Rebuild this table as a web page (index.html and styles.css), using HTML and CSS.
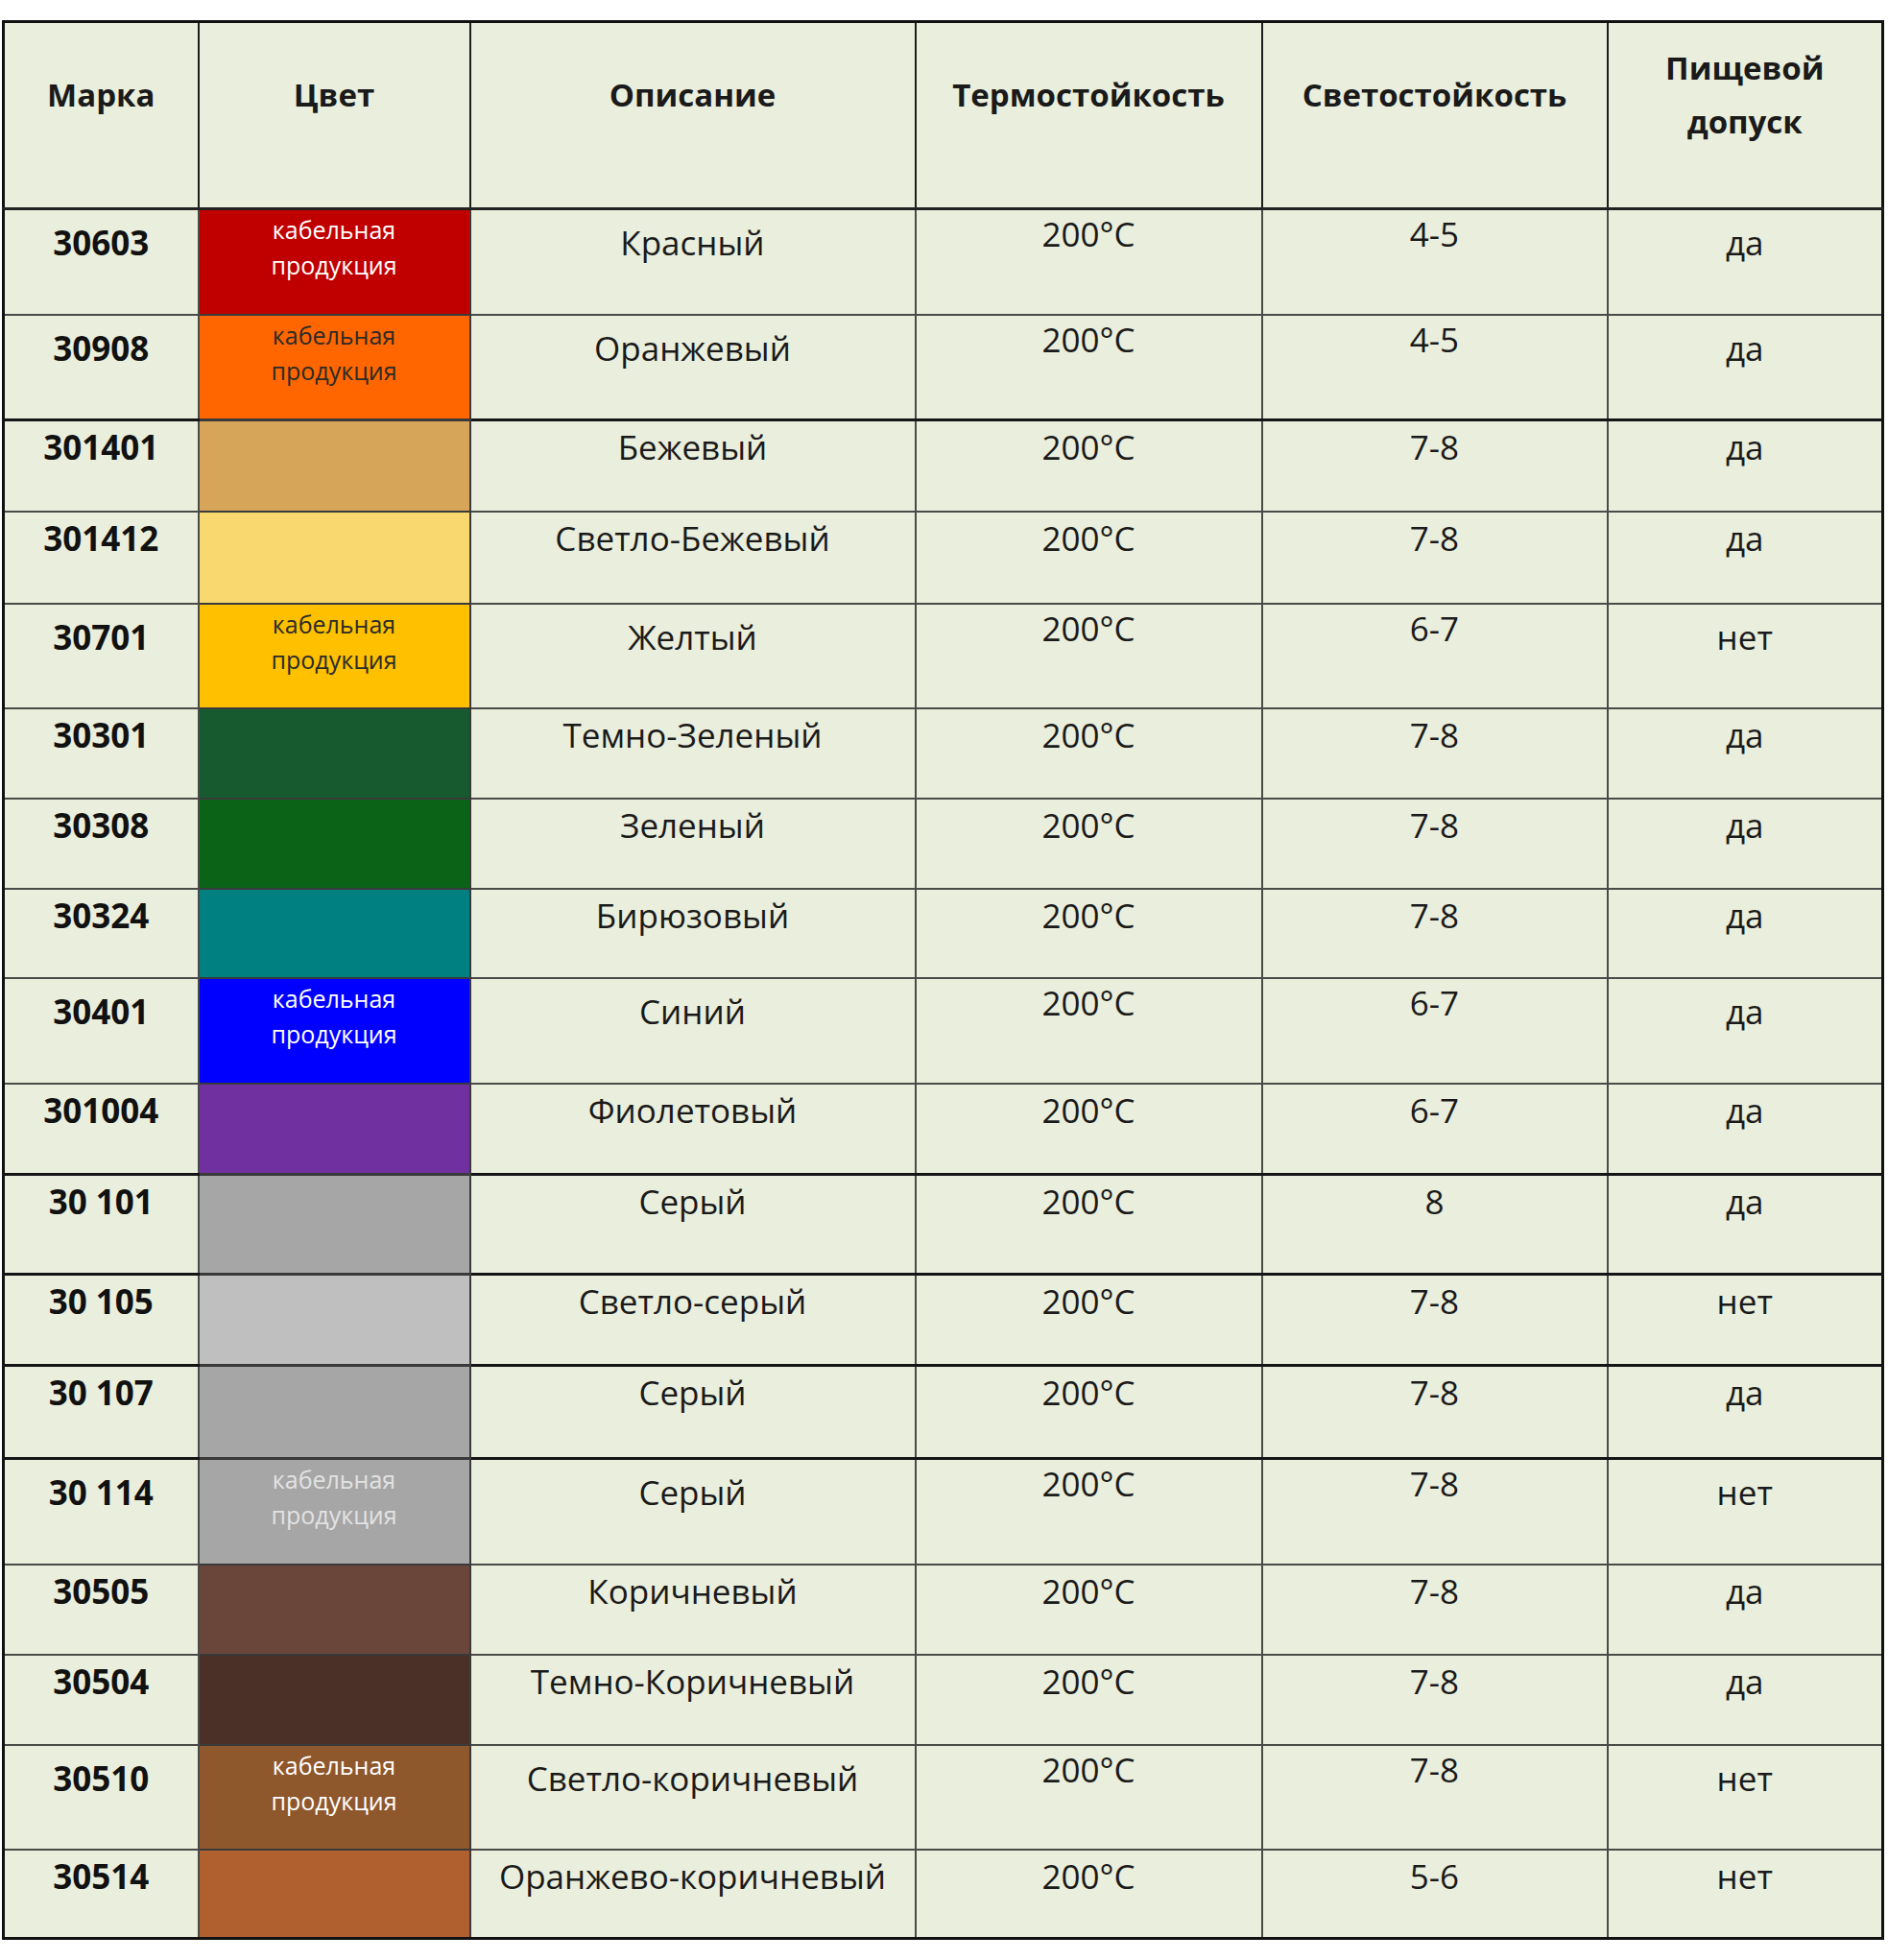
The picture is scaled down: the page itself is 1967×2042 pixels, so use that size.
FILE: index.html
```html
<!DOCTYPE html>
<html lang="ru">
<head>
<meta charset="utf-8">
<title>Цвета</title>
<link rel="stylesheet" href="styles.css">
</head>
<body>
<table class="colors">
  <colgroup>
    <col class="c-mark"><col class="c-color"><col class="c-desc"><col class="c-temp"><col class="c-light"><col class="c-food">
  </colgroup>
  <thead>
    <tr class="head">
      <th>Марка</th><th>Цвет</th><th>Описание</th><th>Термостойкость</th><th>Светостойкость</th><th>Пищевой<br>допуск</th>
    </tr>
  </thead>
  <tbody>
    <tr class="r-cable r110">
      <td class="mark">30603</td><td class="sw red"><span class="cable">кабельная<br>продукция</span></td><td class="desc">Красный</td><td class="temp">200°C</td><td class="temp">4-5</td><td class="food">да</td>
    </tr>
    <tr class="r-cable r110 thick">
      <td class="mark">30908</td><td class="sw orange"><span class="cable dark">кабельная<br>продукция</span></td><td class="desc">Оранжевый</td><td class="temp">200°C</td><td class="temp">4-5</td><td class="food">да</td>
    </tr>
    <tr class="r95">
      <td class="mark">301401</td><td class="sw beige"></td><td class="desc">Бежевый</td><td class="temp">200°C</td><td class="temp">7-8</td><td class="food">да</td>
    </tr>
    <tr class="r96">
      <td class="mark">301412</td><td class="sw lbeige"></td><td class="desc">Светло-Бежевый</td><td class="temp">200°C</td><td class="temp">7-8</td><td class="food">да</td>
    </tr>
    <tr class="r-cable r109">
      <td class="mark">30701</td><td class="sw yellow"><span class="cable dark">кабельная<br>продукция</span></td><td class="desc">Желтый</td><td class="temp">200°C</td><td class="temp">6-7</td><td class="food">нет</td>
    </tr>
    <tr class="r94">
      <td class="mark">30301</td><td class="sw dgreen"></td><td class="desc">Темно-Зеленый</td><td class="temp">200°C</td><td class="temp">7-8</td><td class="food">да</td>
    </tr>
    <tr class="r94">
      <td class="mark">30308</td><td class="sw green"></td><td class="desc">Зеленый</td><td class="temp">200°C</td><td class="temp">7-8</td><td class="food">да</td>
    </tr>
    <tr class="r93">
      <td class="mark">30324</td><td class="sw teal"></td><td class="desc">Бирюзовый</td><td class="temp">200°C</td><td class="temp">7-8</td><td class="food">да</td>
    </tr>
    <tr class="r-cable r110">
      <td class="mark">30401</td><td class="sw blue"><span class="cable">кабельная<br>продукция</span></td><td class="desc">Синий</td><td class="temp">200°C</td><td class="temp">6-7</td><td class="food">да</td>
    </tr>
    <tr class="r95 thick">
      <td class="mark">301004</td><td class="sw purple"></td><td class="desc">Фиолетовый</td><td class="temp">200°C</td><td class="temp">6-7</td><td class="food">да</td>
    </tr>
    <tr class="r104 thick">
      <td class="mark">30 101</td><td class="sw gray"></td><td class="desc">Серый</td><td class="temp">200°C</td><td class="temp">8</td><td class="food">да</td>
    </tr>
    <tr class="r95 thick">
      <td class="mark">30 105</td><td class="sw lgray"></td><td class="desc">Светло-серый</td><td class="temp">200°C</td><td class="temp">7-8</td><td class="food">нет</td>
    </tr>
    <tr class="r97 thick">
      <td class="mark">30 107</td><td class="sw gray"></td><td class="desc">Серый</td><td class="temp">200°C</td><td class="temp">7-8</td><td class="food">да</td>
    </tr>
    <tr class="r-cable r110">
      <td class="mark">30 114</td><td class="sw gray"><span class="cable pale">кабельная<br>продукция</span></td><td class="desc">Серый</td><td class="temp">200°C</td><td class="temp">7-8</td><td class="food">нет</td>
    </tr>
    <tr class="r94">
      <td class="mark">30505</td><td class="sw brown"></td><td class="desc">Коричневый</td><td class="temp">200°C</td><td class="temp">7-8</td><td class="food">да</td>
    </tr>
    <tr class="r94">
      <td class="mark">30504</td><td class="sw dbrown"></td><td class="desc">Темно-Коричневый</td><td class="temp">200°C</td><td class="temp">7-8</td><td class="food">да</td>
    </tr>
    <tr class="r-cable r109">
      <td class="mark">30510</td><td class="sw lbrown"><span class="cable">кабельная<br>продукция</span></td><td class="desc">Светло-коричневый</td><td class="temp">200°C</td><td class="temp">7-8</td><td class="food">нет</td>
    </tr>
    <tr class="r93 last">
      <td class="mark">30514</td><td class="sw obrown"></td><td class="desc">Оранжево-коричневый</td><td class="temp">200°C</td><td class="temp">5-6</td><td class="food">нет</td>
    </tr>
  </tbody>
</table>
</body>
</html>
```
FILE: styles.css
```css
html, body {
  margin: 0;
  padding: 0;
  background: #ffffff;
}

body {
  padding: 21px 0 0 2px;
  font-family: "Open Sans", "Liberation Sans", sans-serif;
  color: #1a1a1a;
}

.colors {
  border-collapse: collapse;
  table-layout: fixed;
  width: 1958px;
  background: #eaeedc;
  border: 3px solid #111;
}

.c-mark { width: 203px; }
.c-color { width: 283px; }
.c-desc { width: 464px; }
.c-temp { width: 361px; }
.c-light { width: 360px; }
.c-food { width: 287px; }

.colors th,
.colors td {
  border: 2px solid #4a4a48;
  text-align: center;
  padding: 0;
}

.colors th {
  border-color: #1e1e1e;
  font-size: 33px;
  font-weight: 700;
  line-height: 56px;
  vertical-align: middle;
  padding-bottom: 42px;
  height: 150px;
  border-bottom: 3px solid #222;
}

.colors td {
  font-size: 35px;
  line-height: 44px;
  vertical-align: top;
  padding-top: 5px;
}

.colors td.mark {
  font-weight: 700;
  color: #111;
}

.colors td.sw {
  padding-top: 2px;
  border-color: #3a3a3a;
}

.r-cable td.mark,
.r-cable td.desc,
.r-cable td.food {
  padding-top: 12px;
}

.r-cable td.temp {
  padding-top: 3px;
}

tr.thick td {
  border-bottom: 3px solid #151515;
}

.r93 { height: 93px; }
.r94 { height: 94px; }
.r95 { height: 95px; }
.r96 { height: 96px; }
.r97 { height: 97px; }
.r104 { height: 104px; }
.r109 { height: 109px; }
.r110 { height: 110px; }

.cable {
  display: block;
  font-size: 25px;
  line-height: 37px;
  color: #ffffff;
}

.cable.dark { color: #2b2b2b; }
.cable.pale { color: #e2e2e2; }

.red { background: #c00000; }
.orange { background: #ff6600; }
.beige { background: #d7a55a; }
.lbeige { background: #f8d86f; }
.yellow { background: #ffc000; }
.dgreen { background: #175a30; }
.green { background: #0b6318; }
.teal { background: #008080; }
.blue { background: #0000ff; }
.purple { background: #7030a0; }
.gray { background: #a6a6a6; }
.lgray { background: #bfbfbf; }
.brown { background: #69453a; }
.dbrown { background: #4a3026; }
.lbrown { background: #8e572c; }
.obrown { background: #b05f2f; }
```
